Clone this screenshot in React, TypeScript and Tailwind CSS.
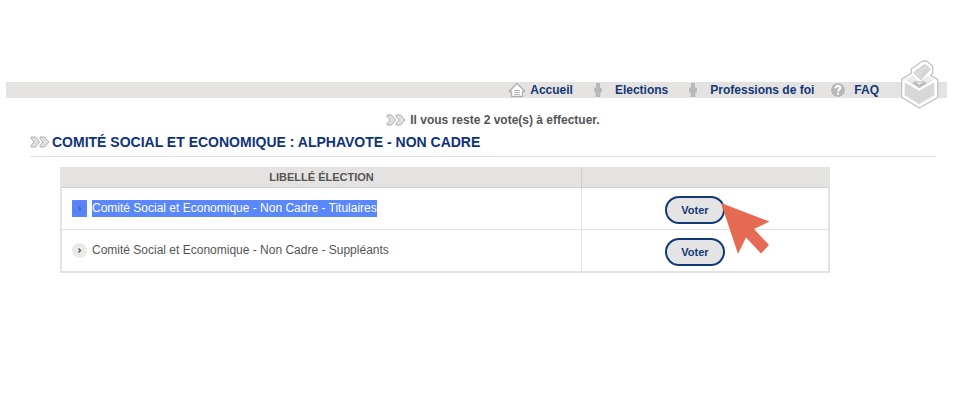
import React from "react";

const HomeIcon = () => (
  <svg width="18" height="16" viewBox="0 0 18 16" fill="none" aria-hidden="true">
    <path d="M3.5 8v7h11V8L9 2.5z" fill="#fff" />
    <path d="M3.5 9.500v5h11v-5M1 9.500h2.500M14.500 9.500H17M1 9.500 9 1.500l8 8" stroke="#b0b0b0" strokeWidth="1.300" />
    <path d="M6 8.500h6M6 10.500h6M6 12.500h6" stroke="#b8b8b8" />
  </svg>
);

const PersonIcon = () => (
  <svg width="10" height="16" viewBox="0 0 10 16" aria-hidden="true">
    <g fill="#b8b8b8">
      <path d="M1 5.500h8v5H7.500V15h-5v-4.500H1z" stroke="#f3f3f2" strokeWidth="1" paintOrder="stroke" />
      <circle cx="5" cy="3" r="2.400" stroke="#f3f3f2" strokeWidth="1" paintOrder="stroke" />
      <path d="M3 4h4v3H3z" />
    </g>
  </svg>
);

const HelpIcon = () => (
  <svg width="16" height="16" viewBox="0 0 16 16" aria-hidden="true">
    <circle cx="8" cy="8" r="7.500" fill="#b8b8b8" stroke="#f3f3f2" strokeWidth="0.800" />
    <path d="M5.700 6.200C5.700 3.300 10.300 3.500 10.300 6c0 1.700-2.300 1.700-2.300 3.500M8 10.700v2" fill="none" stroke="#fff" strokeWidth="2" />
  </svg>
);

const Chevrons = () => (
  <svg width="20" height="12" viewBox="0 0 20 12" aria-hidden="true" className="shrink-0">
    <g fill="#e0e0e0" stroke="#a8a8a8" strokeWidth="0.900">
      <path d="M1 1h4.500l4 5-4 5H1V9.500L4 6 1 2.500z" />
      <path d="M10 1h4.500l4.500 5-4.500 5H10V9.500L13 6l-3-3.500z" />
    </g>
  </svg>
);

const BallotBox = () => (
  <svg width="39" height="49" viewBox="600 28 117 147" aria-hidden="true" className="absolute right-2 -top-[22px]">
    <path d="M658 172 605 140V86l29-18V55l34-24h12l18 16v20l-6 8 21 11v54z" fill="#fff" stroke="#c3c3c3" strokeWidth="4" strokeLinejoin="round" />
    <path d="m616 88 22-12 20 22 22-22 22 12-44 26z" fill="#e9e9e9" />
    <path d="m614 95 44 25 45-25v39l-45 27-44-27z" fill="#d7d7d7" />
    <path d="m636 98 9-6h27l9 6-23 14z" fill="#bdbdbd" />
    <path d="m648 94 10 9 11-9z" fill="#e4e4e4" />
    <path d="m641 66 33-25 17 14-28 33z" fill="#d6d6d6" stroke="#c6c6c6" strokeWidth="2" />
    <path d="m650 66 7 8M657 62l5 5M665 56l5 5M672 50l5 5" stroke="#f1f1f1" strokeWidth="3" />
  </svg>
);

const Bullet = ({ selected }: { selected?: boolean }) => (
  <svg
    width="15"
    height="17"
    viewBox="0 0 15 17"
    aria-hidden="true"
    className={selected ? "shrink-0 bg-[#5a87fb]" : "shrink-0"}
  >
    <circle cx="7.500" cy="8.500" r="7.500" fill={selected ? "#5783f5" : "#ebeae9"} />
    <path d="m6.500 6.500 2 2-2 2" fill="none" stroke={selected ? "#4469d0" : "#555"} strokeWidth="1.300" />
  </svg>
);

const Pointer = () => (
  <svg width="49" height="51" viewBox="0 0 49 51" aria-hidden="true" className="pointer-events-none absolute left-14 top-[10px]">
    <path d="M0 0 48.500 18.500 33 26 48 42 40 50.500 25 34.500 17 51z" fill="#e56b55" />
  </svg>
);

const rows = [
  { label: "Comité Social et Economique - Non Cadre - Titulaires", selected: true },
  { label: "Comité Social et Economique - Non Cadre - Suppléants", selected: false },
];

export default function App() {
  return (
    <div className="min-h-screen bg-white pl-[6px] pr-[7px] pt-[82px] font-['Liberation_Sans',Arial,sans-serif] text-xs text-[#555]">
      <nav className="relative flex h-4 items-center justify-end bg-[#e4e3e1] pr-[68px] font-bold text-[#133876]">
        <a href="#accueil" className="flex items-center gap-1"><HomeIcon />Accueil</a>
        <a href="#elections" className="ml-5 flex items-center gap-3"><PersonIcon />Elections</a>
        <a href="#professions" className="ml-5 flex items-center gap-3"><PersonIcon />Professions de foi</a>
        <a href="#faq" className="ml-4 flex items-center gap-2"><HelpIcon />FAQ</a>
        <BallotBox />
      </nav>
      <main className="pl-6 pr-[11px]">
        <p className="mt-3 flex h-5 items-center justify-center gap-1 pl-5 font-bold">
          <Chevrons />Il vous reste 2 vote(s) à effectuer.
        </p>
        <h1 className="flex h-[27px] items-center gap-0.5 border-b border-[#e4e3e1] pb-0.5 text-sm font-bold text-[#0f337a]">
          <Chevrons />COMITÉ SOCIAL ET ECONOMIQUE : ALPHAVOTE - NON CADRE
        </h1>
        <div className="ml-[30px] mr-[106px] mt-[10px]">
          <table className="w-full table-fixed border-separate border-spacing-0 border-2 border-t-0 border-[#e4e3e1]">
            <thead>
              <tr className="h-[21px] bg-[#e4e3e1] text-[11px]">
                <th scope="col" className="border-b border-r border-[#d0d0d0] p-0">LIBELLÉ ÉLECTION</th>
                <th scope="col" aria-label="Action" className="w-[246px] border-b border-[#d0d0d0] p-0" />
              </tr>
            </thead>
            <tbody>
              {rows.map(({ label, selected }) => (
                <tr key={label} className="group h-[42px] last:h-[41px]">
                  <td className="border-b border-r border-[#e4e3e1] p-0 pl-[10px] group-last:border-b-0">
                    <span className="flex items-center gap-[5px]">
                      <Bullet selected={selected} />
                      <span className={selected ? "bg-[#5a87fb] leading-[17px] text-white" : "leading-[17px]"}>{label}</span>
                    </span>
                  </td>
                  <td className="border-b border-[#e4e3e1] p-0 group-last:border-b-0">
                    <div className="relative ml-[83px] w-[60px] pt-[3px]">
                      <button type="button" className="block h-7 w-full rounded-full border-2 border-[#133876] bg-[#e4e4e4] text-[11px] font-bold text-[#133876]">
                        Voter
                      </button>
                      {selected && <Pointer />}
                    </div>
                  </td>
                </tr>
              ))}
            </tbody>
          </table>
        </div>
      </main>
    </div>
  );
}
